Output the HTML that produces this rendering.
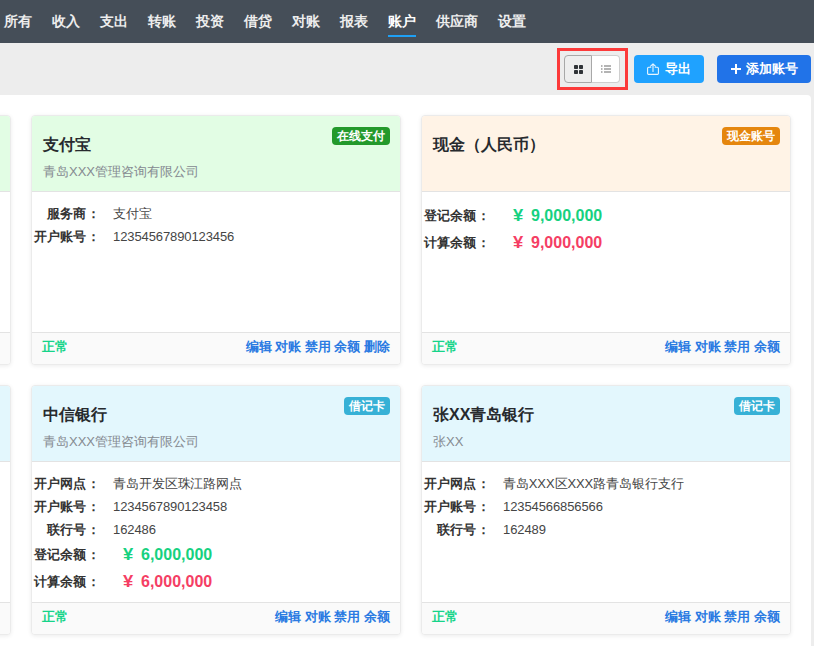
<!DOCTYPE html>
<html><head><meta charset="utf-8">
<style>
*{box-sizing:border-box;margin:0;padding:0}
html,body{width:814px;height:646px;overflow:hidden;background:#ededed;font-family:"Liberation Sans",sans-serif;color:#333}
.nav{position:absolute;left:0;top:0;width:814px;height:43px;background:#454e58}
.nav span{position:absolute;top:0;height:43px;line-height:42px;font-size:14px;font-weight:bold;color:#ededed}
.nav span.act{font-weight:bold;color:#fff}
.nav .act:after{content:"";position:absolute;left:0;right:0;top:35px;height:2px;background:#1ea0f5}
.tb{position:absolute;left:0;top:43px;width:814px;height:52px;background:#ededed}
.redbox{position:absolute;left:557px;top:48px;width:71px;height:42px;border:3px solid #fc3a3a}
.bg{position:absolute;left:564px;top:55px;width:56px;height:28px}
.bg .b1{position:absolute;left:0;top:0;width:28px;height:28px;background:#eeeeee;border:1px solid #a8a8a8;border-radius:4px 0 0 4px}
.bg .b2{position:absolute;left:28px;top:0;width:28px;height:28px;background:#fff;border:1px solid #cfcfcf;border-left:none;border-radius:0 4px 4px 0}
.btn{position:absolute;top:55px;height:28px;border-radius:4px;color:#fff;font-size:13px;font-weight:bold;line-height:28px}
.exp{left:634px;width:70px;background:#1fa2ff}
.add{left:717px;width:94px;background:#2173e8}
.panel{position:absolute;left:-10px;top:95px;width:821px;height:600px;background:#fff;border-radius:4px}
.card{position:absolute;width:370px;height:250px;background:#fff;border:1px solid #ebebeb;border-radius:4px;box-shadow:0 1px 4px rgba(0,0,0,.08)}
.hd{position:absolute;left:0;top:0;width:100%;height:76px;border-bottom:1px solid #e3e3e3;border-radius:3px 3px 0 0}
.title{position:absolute;left:11px;top:18px;font-size:16px;font-weight:bold;color:#272a2e;line-height:22px;white-space:nowrap}
.sub{position:absolute;left:11px;top:47px;font-size:13px;color:#858a91;line-height:18px;white-space:nowrap}
.tag{position:absolute;right:10px;top:11px;height:18px;line-height:18px;padding:0 5px;border-radius:4px;color:#fff;font-size:12px;font-weight:bold}
.bd{position:absolute;left:0;top:76px;width:100%;padding-top:10px}
.row{position:relative;height:23px;line-height:23px;font-size:13px;white-space:nowrap}
.row .l{position:absolute;right:301px;text-align:right;font-size:13px;font-weight:bold;color:#333}
.row .l i{font-style:normal;position:relative;left:1px}
.row .v{position:absolute;left:81px;color:#454545;letter-spacing:-0.1px}
.row.amt{height:27px;line-height:27px}
.row.amt .v{left:90px;font-size:16px;font-weight:bold;letter-spacing:0}
.row.amt .y{display:inline-block;width:19px;font-weight:bold;transform:translateX(1px) scaleX(1.15);transform-origin:0 50%}
.row .g{color:#16d17f}.row .r{color:#f53e64}
.ft{position:absolute;left:0;bottom:0;width:100%;height:32px;background:#fafafa;border-top:1px solid #e3e3e3;border-radius:0 0 3px 3px;font-size:13px;font-weight:bold;line-height:28px}
.ft .st{position:absolute;left:10px;color:#16d48a}
.ft .ops{position:absolute;right:10px;color:#2a7ae2}
</style></head><body>
<div class="nav">
<span style="left:4px">所有</span>
<span style="left:52px">收入</span>
<span style="left:100px">支出</span>
<span style="left:148px">转账</span>
<span style="left:196px">投资</span>
<span style="left:244px">借贷</span>
<span style="left:292px">对账</span>
<span style="left:340px">报表</span>
<span class="act" style="left:388px">账户</span>
<span style="left:436px">供应商</span>
<span style="left:498px">设置</span>
</div>
<div class="tb"></div>
<div class="redbox"></div>
<div class="bg"><div class="b1"></div><div class="b2"></div>
<svg style="position:absolute;left:0;top:0" width="56" height="28" viewBox="0 0 56 28">
<g fill="#2f3337"><rect x="10" y="10" width="4" height="4" rx="0.8"/><rect x="15" y="10" width="4" height="4" rx="0.8"/><rect x="10" y="15" width="4" height="4" rx="0.8"/><rect x="15" y="15" width="4" height="4" rx="0.8"/></g>
<g fill="#b4b4b4"><rect x="37" y="10" width="1.5" height="2"/><rect x="37" y="13" width="1.5" height="2"/><rect x="37" y="16" width="1.5" height="2"/><rect x="40" y="10" width="7" height="2"/><rect x="40" y="13" width="7" height="2"/><rect x="40" y="16" width="7" height="2"/></g>
</svg></div>
<div class="btn exp"><svg style="position:absolute;left:13px;top:8px" width="12" height="12" viewBox="0 0 12 12" fill="none" stroke="rgba(255,255,255,.9)" stroke-width="1.1" stroke-linecap="round" stroke-linejoin="round"><path d="M6 8.5V0.8M3.6 3.2L6 0.8L8.4 3.2"/><path d="M3.8 4.3H1.6Q0.6 4.3 0.6 5.3V10.6Q0.6 11.4 1.4 11.4H10.6Q11.4 11.4 11.4 10.6V5.3Q11.4 4.3 10.4 4.3H8.2"/></svg><span style="position:absolute;left:31px">导出</span></div>
<div class="btn add"><svg style="position:absolute;left:14px;top:9px" width="10" height="10" viewBox="0 0 10 10" fill="#fff"><rect x="0" y="4" width="10" height="2"/><rect x="4" y="0" width="2" height="10"/></svg><span style="position:absolute;left:29px">添加账号</span></div>
<div class="panel"></div>

<!-- col1 row1 -->
<div class="card" style="left:-359px;top:115px"><div class="hd" style="background:#e2fde4"></div><div class="ft"><span class="ops" style="right:11px">编辑 对账 禁用 余额</span></div></div>
<div class="card" style="left:-359px;top:385px"><div class="hd" style="background:#e3f7fd"></div><div class="ft"><span class="ops" style="right:11px">编辑 对账 禁用 余额</span></div></div>

<div class="card" style="left:31px;top:115px">
 <div class="hd" style="background:#e2fde4"><div class="title">支付宝</div><div class="sub">青岛XXX管理咨询有限公司</div><div class="tag" style="background:#23992b">在线支付</div></div>
 <div class="bd">
  <div class="row"><span class="l">服务商<i>：</i></span><span class="v">支付宝</span></div>
  <div class="row"><span class="l">开户账号<i>：</i></span><span class="v">12354567890123456</span></div>
 </div>
 <div class="ft"><span class="st">正常</span><span class="ops">编辑 对账 禁用 余额 删除</span></div>
</div>

<div class="card" style="left:421px;top:115px">
 <div class="hd" style="background:#fff3e6"><div class="title">现金（人民币）</div><div class="tag" style="background:#e5860e">现金账号</div></div>
 <div class="bd">
  <div class="row amt"><span class="l">登记余额<i>：</i></span><span class="v g"><b class="y">¥</b>9,000,000</span></div>
  <div class="row amt"><span class="l">计算余额<i>：</i></span><span class="v r"><b class="y">¥</b>9,000,000</span></div>
 </div>
 <div class="ft"><span class="st">正常</span><span class="ops">编辑 对账 禁用 余额</span></div>
</div>

<div class="card" style="left:31px;top:385px">
 <div class="hd" style="background:#e3f7fd"><div class="title">中信银行</div><div class="sub">青岛XXX管理咨询有限公司</div><div class="tag" style="background:#37b1d6">借记卡</div></div>
 <div class="bd">
  <div class="row"><span class="l">开户网点<i>：</i></span><span class="v">青岛开发区珠江路网点</span></div>
  <div class="row"><span class="l">开户账号<i>：</i></span><span class="v">1234567890123458</span></div>
  <div class="row"><span class="l">联行号<i>：</i></span><span class="v">162486</span></div>
  <div class="row amt"><span class="l">登记余额<i>：</i></span><span class="v g"><b class="y">¥</b>6,000,000</span></div>
  <div class="row amt"><span class="l">计算余额<i>：</i></span><span class="v r"><b class="y">¥</b>6,000,000</span></div>
 </div>
 <div class="ft"><span class="st">正常</span><span class="ops">编辑 对账 禁用 余额</span></div>
</div>

<div class="card" style="left:421px;top:385px">
 <div class="hd" style="background:#e3f7fd"><div class="title">张XX青岛银行</div><div class="sub">张XX</div><div class="tag" style="background:#37b1d6">借记卡</div></div>
 <div class="bd">
  <div class="row"><span class="l">开户网点<i>：</i></span><span class="v">青岛XXX区XXX路青岛银行支行</span></div>
  <div class="row"><span class="l">开户账号<i>：</i></span><span class="v">12354566856566</span></div>
  <div class="row"><span class="l">联行号<i>：</i></span><span class="v">162489</span></div>
 </div>
 <div class="ft"><span class="st">正常</span><span class="ops">编辑 对账 禁用 余额</span></div>
</div>
</body></html>
